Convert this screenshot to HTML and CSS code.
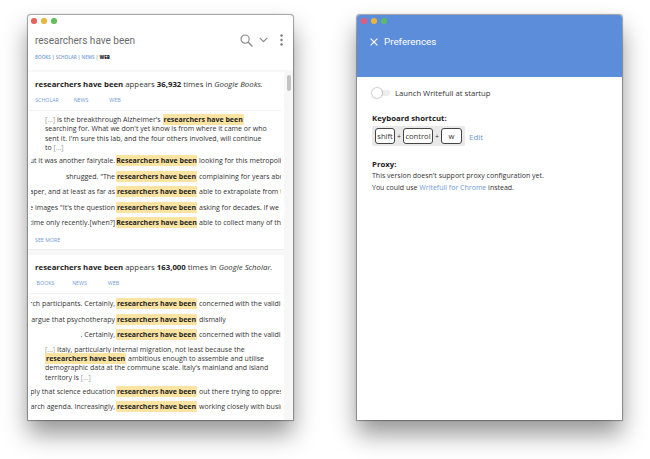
FILE: index.html
```html
<!DOCTYPE html>
<html lang="en">
<head>
    <meta charset="UTF-8" />
    <title>Writefull</title>
    <link rel="stylesheet" href="styles.css">
</head>
<body>
    <!-- Search window -->
    <div class="window">
        <div class="dots">
            <span class="dot red"></span><span class="dot yellow"></span><span class="dot green"></span>
        </div>
        <div class="search-row">
            <span class="query">researchers have been</span>
            <svg class="icon-search" width="13" height="13" viewBox="0 0 14 14"><circle cx="5.5" cy="5.5" r="4.4" fill="none" stroke="#8a8a8a" stroke-width="1.2"/><path d="M8.8 8.8L13.4 13.4" stroke="#8a8a8a" stroke-width="1.5" fill="none"/></svg>
            <svg class="icon-chevron" width="9" height="6" viewBox="0 0 9 6"><path d="M0.7 0.8L4.5 4.6L8.3 0.8" stroke="#8a8a8a" stroke-width="1.2" fill="none"/></svg>
            <svg class="icon-more" width="3" height="12" viewBox="0 0 3 12"><circle cx="1.5" cy="1.5" r="1.2" fill="#777"/><circle cx="1.5" cy="6" r="1.2" fill="#777"/><circle cx="1.5" cy="10.5" r="1.2" fill="#777"/></svg>
        </div>
        <div class="sources">
            <a>BOOKS</a> | <a>SCHOLAR</a> | <a>NEWS</a> | <b>WEB</b>
        </div>

        <div class="results">
            <div class="scrollbar"></div>

            <div class="card card-books">
                <p class="card-title"><b>researchers have been</b> appears <b>36,932</b> times in <i>Google Books.</i></p>
                <div class="tabs tabs-books"><a>SCHOLAR</a><a>NEWS</a><a>WEB</a></div>
                <div class="excerpt">
                    <span class="dim">[...]</span> is the breakthrough Alzheimer's <mark>researchers have been</mark> searching for. What we don't yet know is from where it came or who sent it. I'm sure this lab, and the four others involved, will continue to <span class="dim">[...]</span>
                </div>
                <div class="line"><span class="before"><span>but it was another fairytale.</span></span><mark>Researchers have been</mark><span class="after">looking for this metropolis for years</span></div>
                <div class="line"><span class="before"><span>shrugged. "The</span></span><mark>researchers have been</mark><span class="after">complaining for years about it all</span></div>
                <div class="line"><span class="before"><span>paper, and at least as far as</span></span><mark>researchers have been</mark><span class="after">able to extrapolate from the data</span></div>
                <div class="line"><span class="before"><span>the images "It's the question</span></span><mark>researchers have been</mark><span class="after">asking for decades. If we can only</span></div>
                <div class="line"><span class="before"><span>time only recently.[when?]</span></span><mark>Researchers have been</mark><span class="after">able to collect many of them since</span></div>
                <a class="see-more">SEE MORE</a>
            </div>

            <div class="card card-scholar">
                <p class="card-title"><b>researchers have been</b> appears <b>163,000</b> times in <i>Google Scholar.</i></p>
                <div class="tabs tabs-scholar"><a>BOOKS</a><a>NEWS</a><a>WEB</a></div>
                <div class="line"><span class="before"><span>research participants. Certainly,</span></span><mark>researchers have been</mark><span class="after">concerned with the validity of such</span></div>
                <div class="line"><span class="before"><span>to argue that psychotherapy</span></span><mark>researchers have been</mark><span class="after">dismally</span></div>
                <div class="line"><span class="before"><span>. Certainly,</span></span><mark>researchers have been</mark><span class="after">concerned with the validity of such</span></div>
                <div class="excerpt excerpt-mid">
                    <span class="dim">[...]</span> Italy, particularly internal migration, not least because the <mark>researchers have been</mark> ambitious enough to assemble and utilise demographic data at the commune scale. Italy's mainland and island territory is <span class="dim">[...]</span>
                </div>
                <div class="line"><span class="before"><span>imply that science education</span></span><mark>researchers have been</mark><span class="after">out there trying to oppress the young</span></div>
                <div class="line"><span class="before"><span>research agenda. Increasingly,</span></span><mark>researchers have been</mark><span class="after">working closely with business and</span></div>
            </div>
        </div>
    </div>

    <!-- Preferences window -->
    <div class="window">
        <div class="pref-header">
            <div class="dots">
                <span class="dot red"></span><span class="dot yellow"></span><span class="dot green"></span>
            </div>
            <div class="pref-title">
                <svg width="8" height="8" viewBox="0 0 8 8"><path d="M0.6 0.6L7.4 7.4M7.4 0.6L0.6 7.4" stroke="#fff" stroke-width="1.2" fill="none"/></svg>
                <span>Preferences</span>
            </div>
        </div>
        <div class="pref-body">
            <div class="startup">
                <span class="toggle"><span class="knob"></span></span>
                <span>Launch Writefull at startup</span>
            </div>
            <h4 class="pref-label">Keyboard shortcut:</h4>
            <div class="shortcut-row">
                <div class="keys">
                    <span class="key key-shift">shift</span><span class="plus">+</span><span class="key key-control">control</span><span class="plus">+</span><span class="key key-w">w</span>
                </div>
                <a class="edit">Edit</a>
            </div>
            <h4 class="pref-label proxy-label">Proxy:</h4>
            <p class="proxy-text">This version doesn't support proxy configuration yet.</p>
            <p class="proxy-text">You could use <a>Writefull for Chrome</a> instead.</p>
        </div>
    </div>
</body>
</html>
```

FILE: styles.css
```css
:root {
    --link-color: #6f9ad8;
    --text-color: #333333;
    --blue-header: #5b8ddb;
}

* {
    box-sizing: border-box;
}

html, body {
    height: 100%;
}

body {
    margin: 0;
    padding: 15px 0 0 28px;
    display: flex;
    gap: 64px;
    align-items: flex-start;
    overflow: hidden;
    background: white;
    color: var(--text-color);
    font-family: "Open Sans", sans-serif;
}

p, h4 {
    margin: 0;
}

.window {
    width: 265px;
    height: 405px;
    display: flex;
    flex-direction: column;
    background: white;
    border-radius: 3px 3px 0 0;
    box-shadow: 0 0 1px 0.5px rgba(0,0,0,0.35), 0 14px 24px rgba(0,0,0,0.42);
    flex: none;
}

/* title bar dots */
.dots {
    height: 12px;
    padding: 3px 0 0 3px;
    display: flex;
    gap: 4.5px;
}

.dot {
    width: 5.5px;
    height: 5.5px;
    border-radius: 50%;
}

.dot.red { background: #e5645a; }
.dot.yellow { background: #e8b53f; }
.dot.green { background: #65bd5c; }

/* search window */
.search-row {
    height: 26px;
    display: flex;
    align-items: center;
    padding: 0 10px 0 7px;
    color: #6b6b6b;
}

.query {
    flex: 1;
    font-family: "Roboto", sans-serif;
    font-size: 10px;
}

.icon-chevron {
    margin: 0 12px 0 6px;
}

.sources {
    height: 17px;
    padding: 1px 0 0 7px;
    font-size: 4.6px;
    font-weight: 600;
    color: #777;
}

.sources a {
    color: var(--link-color);
}

.sources b {
    color: #222;
}

.results {
    position: relative;
    flex: 1;
    min-height: 0;
    padding: 0 9px 0 0;
    background: #f7f7f7;
    overflow: hidden;
}

.scrollbar {
    position: absolute;
    top: 5px;
    right: 2px;
    width: 4px;
    height: 16px;
    border-radius: 2px;
    background: #c4c4c4;
}

.card {
    background: white;
    padding: 6px 0 0 7px;
    border-bottom: 1px solid #eeeeee;
}

.card-books {
    height: 178px;
    margin-top: 2px;
}

.card-scholar {
    height: 170px;
    margin-top: 5px;
}

.card-title {
    font-size: 7.8px;
    line-height: 12px;
    white-space: nowrap;
}

.card-title b {
    font-weight: 700;
    color: #222;
}

.tabs {
    display: grid;
    grid-template-columns: repeat(3, 34px);
    justify-items: center;
    align-items: center;
    height: 21px;
    font-size: 5.3px;
    color: var(--link-color);
    border-bottom: 1px solid #f2f2f2;
    margin-right: 3px;
}

.tabs-books {
    margin-left: -5px;
}

.tabs-scholar {
    margin-left: -6.5px;
    margin-bottom: 2px;
}

.excerpt {
    padding: 4px 16px 0 10px;
    font-size: 7px;
    line-height: 9.4px;
}

.card-books .excerpt {
    height: 42px;
}

.excerpt-mid {
    padding: 2px 10px 0 10px;
    height: 41px;
}

.dim {
    color: #999;
}

mark {
    background: #fbe3a1;
    color: #222;
    font-weight: 700;
    font-size: 7px;
    padding: 1px;
    border-radius: 1px;
}

/* one concordance row, centred on the highlighted words */
.line {
    display: flex;
    align-items: center;
    height: 15.5px;
    margin-left: -4px;
    font-size: 7px;
    white-space: nowrap;
}

.before {
    width: 85px;
    flex: none;
    display: flex;
    justify-content: flex-end;
    overflow: hidden;
    padding-right: 1px;
}

.before span {
    flex: none;
}

.line mark {
    flex: none;
    width: 81px;
    text-align: center;
    line-height: 11px;
    padding: 0;
}

.after {
    width: 84px;
    flex: none;
    overflow: hidden;
    padding-left: 2px;
}

.see-more {
    display: block;
    margin-top: 5px;
    font-size: 5.3px;
    color: var(--link-color);
}

/* preferences window */
.pref-header {
    height: 62px;
    background: var(--blue-header);
    border-radius: 3px 3px 0 0;
}

.pref-header .dots { padding-left: 4px; }
.pref-header .dot.red { background: #e8587a; }
.pref-header .dot.green { background: #5fb96a; }

.pref-title {
    display: flex;
    align-items: center;
    gap: 6px;
    padding: 9px 0 0 13px;
    color: white;
    font-family: "Roboto", sans-serif;
    font-size: 9.8px;
}

.pref-body {
    padding: 10px 0 0 15px;
}

.startup {
    display: flex;
    align-items: center;
    gap: 5px;
    height: 12px;
    font-size: 7.7px;
}

.toggle {
    position: relative;
    width: 18px;
    height: 6px;
    border-radius: 3px;
    background: #eeeeee;
}

.knob {
    position: absolute;
    left: 0;
    top: -2px;
    width: 10px;
    height: 10px;
    border-radius: 50%;
    background: white;
    box-shadow: 0 0 1px 1px rgba(0,0,0,0.2);
}

.pref-label {
    font-size: 7.8px;
    font-weight: 700;
    color: #222;
    line-height: 12px;
}

.startup + .pref-label {
    margin-top: 13px;
}

.shortcut-row {
    display: flex;
    align-items: center;
    gap: 4px;
    margin-top: 2px;
}

.keys {
    display: flex;
    align-items: center;
    height: 20px;
    padding: 0 3px;
    background: #e9e9e9;
    border-radius: 2px;
}

.key {
    height: 16px;
    border: 1px solid #444;
    border-radius: 3px;
    background: white;
    font-size: 7.6px;
    line-height: 14px;
    text-align: center;
}

.key-shift { width: 20px; }
.key-control { width: 30px; }
.key-w { width: 21px; }

.plus {
    width: 8px;
    text-align: center;
    font-size: 7px;
}

.edit, .proxy-text a {
    color: var(--link-color);
}

.edit {
    font-size: 8px;
}

.proxy-label {
    margin-top: 12px;
}

.proxy-text {
    font-size: 7px;
    line-height: 12px;
}
```
